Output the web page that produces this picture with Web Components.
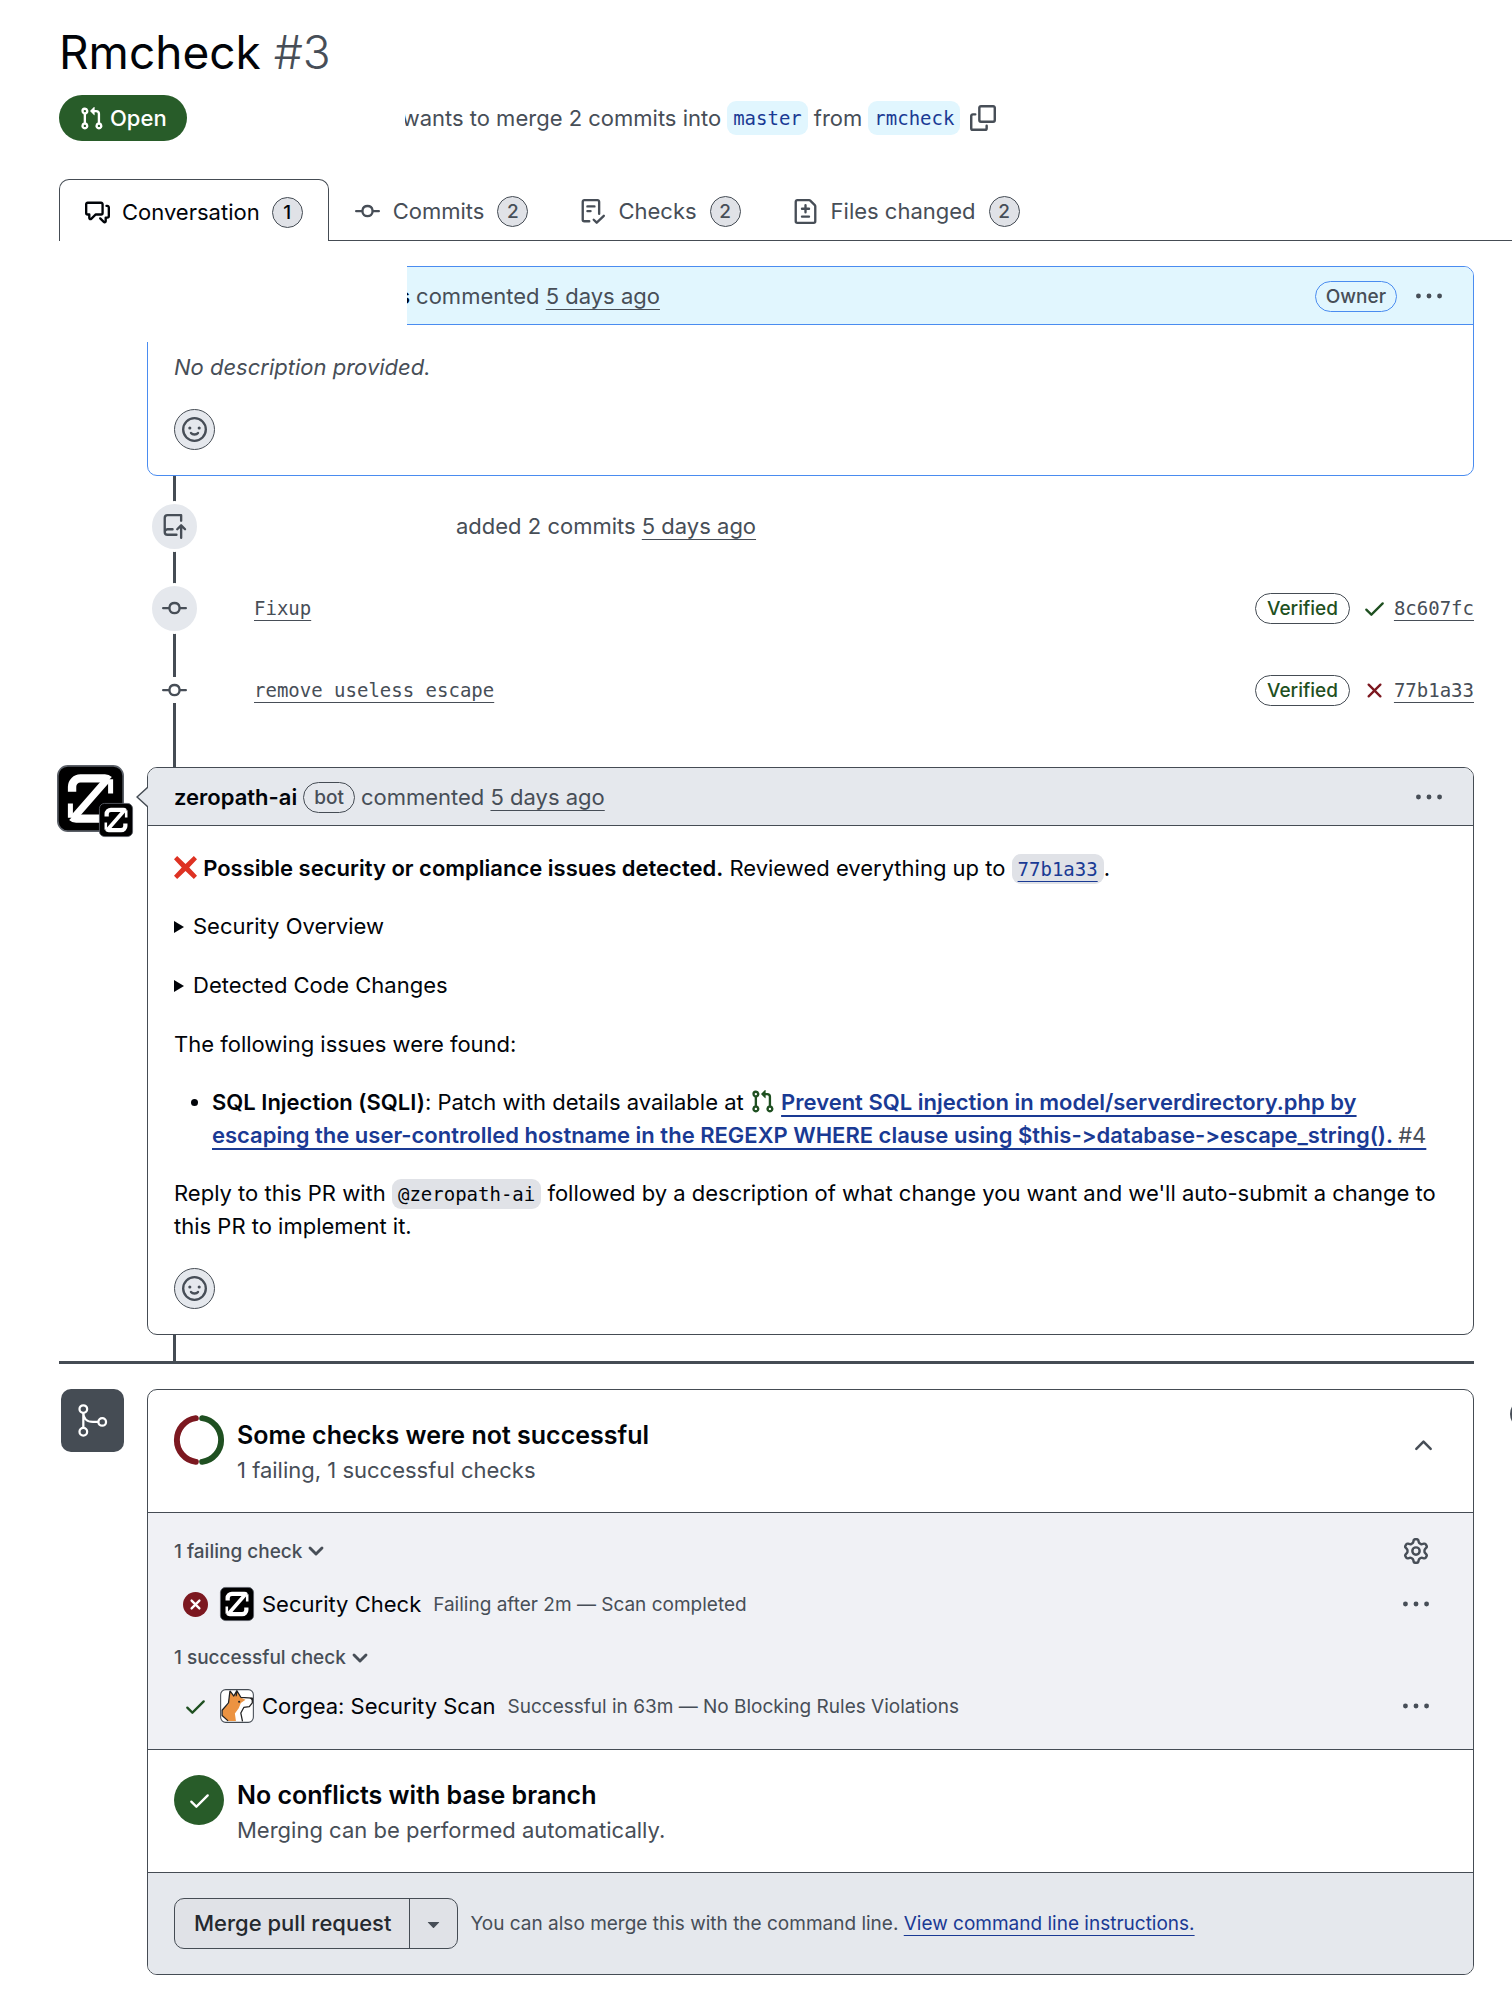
<!DOCTYPE html>
<html lang="en">
<head>
<meta charset="utf-8">
<meta name="viewport" content="width=device-width, initial-scale=1">
<title>Rmcheck #3</title>
<style>
    :root {
        --fg: #010409;
        --muted: #474e57;
        --line: #454c54;
        --subtle: #e5e8ed;
        --inset: #f0f1f5;
        --chip: #e0e2e7;
        --accent: #1a3a94;
        --accent-line: #4a8cf0;
        --accent-bg: #e1f6fe;
        --green: #1f5021;
        --green-bg: #285c29;
        --red: #7c1820;
        --mono: "DejaVu Sans Mono", "Liberation Mono", monospace;
    }

    body {
        margin: 0;
        padding: 22px 0 19px 59px;
        overflow-x: hidden;
        background: #fff;
        color: var(--fg);
        font: 22px/33px Inter, "Liberation Sans", sans-serif;
        font-variant-ligatures: no-contextual;
    }

    a {
        color: var(--muted);
        text-decoration: underline 1px;
        text-underline-offset: 5px;
        text-decoration-skip-ink: none;
    }

    p, ul, details { margin: 0 0 25px; }
    p:last-child { margin: 0; }
    ul { padding-left: 38px; }
    details { margin-bottom: 26px; }
    summary { display: flex; align-items: center; gap: 9px; }

    summary::before {
        content: "";
        border: solid transparent;
        border-width: 6px 0 6px 10px;
        border-left-color: var(--fg);
    }

    b { font-weight: 600; }
    code, .mono { font-family: var(--mono); font-size: 19px; }

    code {
        padding: 4px 6px;
        border-radius: 9px;
        background: var(--chip);
        line-height: 19px;
    }

    code a { color: var(--accent); }
    .muted { color: var(--muted); }
    .cross { vertical-align: -3px; }
    .patch { color: var(--accent); text-decoration-thickness: 2px; font-weight: 600; }
    .patch span { color: var(--muted); font-weight: 400; }
    .green { color: var(--green); }
    .inline { vertical-align: -4px; }

    .column { padding-right: 38px; }
    .timeline { padding-left: 88px; }
</style>
</head>
<body>

<pr-header number="#3" state="Open">
    <span slot="title">Rmcheck</span>
    <span>wants to merge 2 commits into</span>
    <pr-branch name="master"></pr-branch>
    <span>from</span>
    <pr-branch name="rmcheck"></pr-branch>
</pr-header>

<pr-tabs>
    <pr-tab icon="discussion" count="1" selected>Conversation</pr-tab>
    <pr-tab icon="commit" count="2">Commits</pr-tab>
    <pr-tab icon="checklist" count="2">Checks</pr-tab>
    <pr-tab icon="diff" count="2">Files changed</pr-tab>
</pr-tabs>

<main>
    <div class="column">
        <div class="timeline">
            <pr-comment own>
                <b slot="head">s</b>
                <span slot="head" class="muted">commented <a href="#">5 days ago</a></span>
                <pr-label slot="actions" tone="accent">Owner</pr-label>
                <i class="muted">No description provided.</i>
            </pr-comment>

            <pr-events>
                <pr-event icon="push" badge author>
                    <span class="muted">added 2 commits <a href="#">5 days ago</a></span>
                </pr-event>
                <pr-event icon="commit" badge>
                    <a class="mono" href="#">Fixup</a>
                    <pr-label slot="end" tone="green">Verified</pr-label>
                    <pr-icon slot="end" name="check" size="25" style="color: var(--green)"></pr-icon>
                    <a slot="end" class="mono" href="#">8c607fc</a>
                </pr-event>
                <pr-event icon="commit">
                    <a class="mono" href="#">remove useless escape</a>
                    <pr-label slot="end" tone="green">Verified</pr-label>
                    <pr-icon slot="end" name="x" size="25" style="color: var(--red)"></pr-icon>
                    <a slot="end" class="mono" href="#">77b1a33</a>
                </pr-event>
            </pr-events>

            <pr-comment avatar>
                <b slot="head">zeropath-ai</b>
                <pr-label slot="head">bot</pr-label>
                <span slot="head" class="muted">commented <a href="#">5 days ago</a></span>
                <p><pr-icon class="cross" name="cross" size="23"></pr-icon> <b>Possible security or compliance issues detected.</b> Reviewed everything up to <code><a href="#">77b1a33</a></code>.</p>
                <details><summary>Security Overview</summary></details>
                <details><summary>Detected Code Changes</summary></details>
                <p>The following issues were found:</p>
                <ul>
                    <li><b>SQL Injection (SQLI)</b>: Patch with details available at <pr-icon class="green inline" name="pull" size="25"></pr-icon> <a class="patch" href="#">Prevent SQL injection in model/serverdirectory.php by escaping the user-controlled hostname in the REGEXP WHERE clause using $this-&gt;database-&gt;escape_string(). <span>#4</span></a></li>
                </ul>
                <p>Reply to this PR with <code>@zeropath-ai</code> followed by a description of what change you want and we'll auto-submit a change to this PR to implement it.</p>
            </pr-comment>
        </div>
        <pr-divider></pr-divider>
    </div>

    <pr-merge></pr-merge>
</main>

<script>
const icons = {
    pull: '<path d="M1.5 3.25a2.25 2.25 0 1 1 3 2.122v5.256a2.251 2.251 0 1 1-1.5 0V5.372A2.25 2.25 0 0 1 1.5 3.25Zm5.677-.177L9.573.677A.25.25 0 0 1 10 .854V2.5h1A2.5 2.5 0 0 1 13.5 5v5.628a2.251 2.251 0 1 1-1.5 0V5a1 1 0 0 0-1-1h-1v1.646a.25.25 0 0 1-.427.177L7.177 3.427a.25.25 0 0 1 0-.354ZM3.75 2.5a.75.75 0 1 0 0 1.5.75.75 0 0 0 0-1.5Zm0 9.5a.75.75 0 1 0 0 1.5.75.75 0 0 0 0-1.5Zm8.25.75a.75.75 0 1 0 1.5 0 .75.75 0 0 0-1.5 0Z"/>',
    discussion: '<path d="M1.75 1h8.5c.966 0 1.75.784 1.75 1.75v5.5A1.75 1.75 0 0 1 10.25 10H7.061l-2.574 2.573A1.458 1.458 0 0 1 2 11.543V10h-.25A1.75 1.75 0 0 1 0 8.25v-5.5C0 1.784.784 1 1.75 1ZM1.5 2.75v5.5c0 .138.112.25.25.25h1a.75.75 0 0 1 .75.75v2.19l2.72-2.72a.749.749 0 0 1 .53-.22h3.5a.25.25 0 0 0 .25-.25v-5.5a.25.25 0 0 0-.25-.25h-8.5a.25.25 0 0 0-.25.25Zm13 2a.25.25 0 0 0-.25-.25h-.5a.75.75 0 0 1 0-1.5h.5c.966 0 1.75.784 1.75 1.75v5.5A1.75 1.75 0 0 1 14.25 12H14v1.543a1.458 1.458 0 0 1-2.487 1.03L9.22 12.28a.749.749 0 0 1 .326-1.275.749.749 0 0 1 .734.215l2.22 2.22v-2.19a.75.75 0 0 1 .75-.75h1a.25.25 0 0 0 .25-.25Z"/>',
    commit: '<path d="M11.93 8.5a4.002 4.002 0 0 1-7.86 0H.75a.75.75 0 0 1 0-1.5h3.32a4.002 4.002 0 0 1 7.86 0h3.32a.75.75 0 0 1 0 1.5Zm-1.43-.75a2.5 2.5 0 1 0-5 0 2.5 2.5 0 0 0 5 0Z"/>',
    checklist: '<path d="M2.5 1.75v11.5c0 .138.112.25.25.25h3.17a.75.75 0 0 1 0 1.5H2.75A1.75 1.75 0 0 1 1 13.25V1.75C1 .784 1.784 0 2.75 0h8.5C12.216 0 13 .784 13 1.75v7.736a.75.75 0 0 1-1.5 0V1.75a.25.25 0 0 0-.25-.25h-8.5a.25.25 0 0 0-.25.25Zm13.274 9.537-4.557 4.45a.75.75 0 0 1-1.055-.008l-1.943-1.95a.75.75 0 0 1 1.062-1.058l1.419 1.425 4.026-3.932a.75.75 0 1 1 1.048 1.074ZM4.75 4h4.5a.75.75 0 0 1 0 1.5h-4.5a.75.75 0 0 1 0-1.5ZM4 7.75A.75.75 0 0 1 4.75 7h2a.75.75 0 0 1 0 1.5h-2A.75.75 0 0 1 4 7.75Z"/>',
    diff: '<path d="M1 1.75C1 .784 1.784 0 2.75 0h7.586c.464 0 .909.184 1.237.513l2.914 2.914c.329.328.513.773.513 1.237v9.586A1.75 1.75 0 0 1 13.25 16H2.75A1.75 1.75 0 0 1 1 14.25Zm1.75-.25a.25.25 0 0 0-.25.25v12.5c0 .138.112.25.25.25h10.5a.25.25 0 0 0 .25-.25V4.664a.25.25 0 0 0-.073-.177l-2.914-2.914a.25.25 0 0 0-.177-.073ZM8 3.25a.75.75 0 0 1 .75.75v1.5h1.5a.75.75 0 0 1 0 1.5h-1.5v1.5a.75.75 0 0 1-1.5 0V7h-1.5a.75.75 0 0 1 0-1.5h1.5V4A.75.75 0 0 1 8 3.25Zm-3 8a.75.75 0 0 1 .75-.75h4.5a.75.75 0 0 1 0 1.5h-4.5a.75.75 0 0 1-.75-.75Z"/>',
    copy: '<path d="M0 6.75C0 5.784.784 5 1.75 5h1.5a.75.75 0 0 1 0 1.5h-1.5a.25.25 0 0 0-.25.25v7.5c0 .138.112.25.25.25h7.5a.25.25 0 0 0 .25-.25v-1.5a.75.75 0 0 1 1.5 0v1.5A1.75 1.75 0 0 1 9.25 16h-7.5A1.75 1.75 0 0 1 0 14.25Z"/><path d="M5 1.75C5 .784 5.784 0 6.75 0h7.5C15.216 0 16 .784 16 1.75v7.5A1.75 1.75 0 0 1 14.25 11h-7.5A1.75 1.75 0 0 1 5 9.25Zm1.75-.25a.25.25 0 0 0-.25.25v7.5c0 .138.112.25.25.25h7.5a.25.25 0 0 0 .25-.25v-7.5a.25.25 0 0 0-.25-.25Z"/>',
    kebab: '<path d="M8 9.5a1.5 1.5 0 1 0 0-3 1.5 1.5 0 0 0 0 3ZM1.5 9.5a1.5 1.5 0 1 0 0-3 1.5 1.5 0 0 0 0 3Zm13 0a1.5 1.5 0 1 0 0-3 1.5 1.5 0 0 0 0 3Z"/>',
    smiley: '<circle cx="8" cy="8" r="7.25" fill="none" stroke="currentColor" stroke-width="1.5"/><circle cx="5" cy="7" r="1"/><circle cx="11" cy="7" r="1"/><path d="M5.75 10.25c1 1.3 3.5 1.3 4.5 0" fill="none" stroke="currentColor" stroke-width="1.5" stroke-linecap="round"/>',
    push: '<path d="M1 2.5A2.5 2.5 0 0 1 3.5 0h8.75a.75.75 0 0 1 .75.75v3.5a.75.75 0 0 1-1.5 0V1.5h-8a1 1 0 0 0-1 1v6.708A2.493 2.493 0 0 1 3.5 9h3.25a.75.75 0 0 1 0 1.5H3.5a1 1 0 0 0 0 2h5.75a.75.75 0 0 1 0 1.5H3.5A2.5 2.5 0 0 1 1 11.5Zm13.23 7.79-1.225-1.224v6.184a.75.75 0 0 1-1.5 0V9.066L10.28 10.29a.75.75 0 0 1-1.06-1.061l2.505-2.504a.75.75 0 0 1 1.06 0L15.29 9.23a.751.751 0 0 1-.018 1.042.751.751 0 0 1-1.042.018Z"/>',
    check: '<path d="M13.78 4.22a.75.75 0 0 1 0 1.06l-7.25 7.25a.75.75 0 0 1-1.06 0L2.22 9.28a.751.751 0 0 1 .018-1.042.751.751 0 0 1 1.042-.018L6 10.94l6.72-6.72a.75.75 0 0 1 1.06 0Z"/>',
    x: '<path d="M3.72 3.72a.75.75 0 0 1 1.06 0L8 6.94l3.22-3.22a.749.749 0 0 1 1.275.326.749.749 0 0 1-.215.734L9.06 8l3.22 3.22a.749.749 0 0 1-.326 1.275.749.749 0 0 1-.734-.215L8 9.06l-3.22 3.22a.751.751 0 0 1-1.042-.018.751.751 0 0 1-.018-1.042L6.94 8 3.72 4.78a.75.75 0 0 1 0-1.06Z"/>',
    cross: '<path d="M2.2 0 8 5.5 13.8 0 16 2.2 10.6 8 16 13.8 13.8 16 8 10.5 2.2 16 0 13.8 5.4 8 0 2.2Z" fill="#de3223"/>',
    failed: '<circle cx="8" cy="8" r="8" fill="var(--red)"/><path d="m5.5 5.5 5 5m0-5-5 5" stroke="#fff" stroke-width="1.5" stroke-linecap="round"/>',
    down: '<path d="M4 6l4 4 4-4" fill="none" stroke="currentColor" stroke-width="1.9" stroke-linecap="round" stroke-linejoin="round"/>',
    up: '<path d="M3.75 10 8 5.75 12.25 10" fill="none" stroke="currentColor" stroke-width="1.5" stroke-linecap="round" stroke-linejoin="round"/>',
    triangle: '<path d="m4.427 7.427 3.396 3.396a.25.25 0 0 0 .354 0l3.396-3.396A.25.25 0 0 0 11.396 7H4.604a.25.25 0 0 0-.177.427Z"/>',
    gear: '<path d="M8 0a8.2 8.2 0 0 1 .701.031C9.444.095 9.99.645 10.16 1.29l.288 1.107c.018.066.079.158.212.224.231.114.454.243.668.386.123.082.233.09.299.071l1.103-.303c.644-.176 1.392.021 1.82.63.27.385.506.792.704 1.218.315.675.111 1.422-.364 1.891l-.814.806c-.049.048-.098.147-.088.294.016.257.016.515 0 .772-.01.147.038.246.088.294l.814.806c.475.469.679 1.216.364 1.891a7.977 7.977 0 0 1-.704 1.217c-.428.61-1.176.807-1.82.63l-1.102-.302c-.067-.019-.177-.011-.3.071a5.909 5.909 0 0 1-.668.386c-.133.066-.194.158-.211.224l-.29 1.106c-.168.646-.715 1.196-1.458 1.26a8.006 8.006 0 0 1-1.402 0c-.743-.064-1.289-.614-1.458-1.26l-.289-1.106c-.018-.066-.079-.158-.212-.224a5.738 5.738 0 0 1-.668-.386c-.123-.082-.233-.09-.299-.071l-1.103.303c-.644.176-1.392-.021-1.82-.63a8.12 8.12 0 0 1-.704-1.218c-.315-.675-.111-1.422.363-1.891l.815-.806c.05-.048.098-.147.088-.294a6.214 6.214 0 0 1 0-.772c.01-.147-.038-.246-.088-.294l-.815-.806C.635 6.045.431 5.298.746 4.623a7.92 7.92 0 0 1 .704-1.217c.428-.61 1.176-.807 1.82-.63l1.102.302c.067.019.177.011.3-.071.214-.143.437-.272.668-.386.133-.066.194-.158.211-.224l.29-1.106C6.009.645 6.556.095 7.299.03 7.53.01 7.764 0 8 0Zm-.571 1.525c-.036.003-.108.036-.137.146l-.289 1.105c-.147.561-.549.967-.998 1.189-.173.086-.34.183-.5.29-.417.278-.97.423-1.529.27l-1.103-.303c-.109-.03-.175.016-.195.045-.22.312-.412.644-.573.99-.014.031-.021.11.059.19l.815.806c.411.406.562.957.53 1.456a4.709 4.709 0 0 0 0 .582c.032.499-.119 1.05-.53 1.456l-.815.806c-.081.08-.073.159-.059.19.162.346.353.677.573.989.02.03.085.076.195.046l1.102-.303c.56-.153 1.113-.008 1.53.27.161.107.328.204.501.29.447.222.85.629.997 1.189l.289 1.105c.029.109.101.143.137.146a6.6 6.6 0 0 0 1.142 0c.036-.003.108-.036.137-.146l.289-1.105c.147-.561.549-.967.998-1.189.173-.086.34-.183.5-.29.417-.278.97-.423 1.529-.27l1.103.303c.109.029.175-.016.195-.045.22-.313.411-.644.573-.99.014-.031.021-.11-.059-.19l-.815-.806c-.411-.406-.562-.957-.53-1.456a4.709 4.709 0 0 0 0-.582c-.032-.499.119-1.05.53-1.456l.815-.806c.081-.08.073-.159.059-.19a6.464 6.464 0 0 0-.573-.989c-.02-.03-.085-.076-.195-.046l-1.102.303c-.56.153-1.113.008-1.53-.27a4.44 4.44 0 0 0-.501-.29c-.447-.222-.85-.629-.997-1.189l-.289-1.105c-.029-.11-.101-.143-.137-.146a6.6 6.6 0 0 0-1.142 0ZM11 8a3 3 0 1 1-6 0 3 3 0 0 1 6 0ZM9.5 8a1.5 1.5 0 1 0-3.001.001A1.5 1.5 0 0 0 9.5 8Z"/>',
    ring: '<g fill="none" stroke-width="1.9" stroke-linecap="round"><path d="M7 1a7.07 7.07 0 0 0 0 14" stroke="var(--red)"/><path d="M9 1a7.07 7.07 0 0 1 0 14" stroke="var(--green)"/></g>',
    merge: '<g fill="none" stroke="currentColor"><circle cx="3.7" cy="2.7" r="1.7"/><circle cx="3.7" cy="12.8" r="1.7"/><circle cx="12.1" cy="8.4" r="1.7"/><path d="M3.7 4.4v6.7M3.7 4.4c0 2.4 1.6 4 4.3 4h2.4"/></g>',
    // two hooked bars joined by a diagonal, drawn on black
    zero: '<rect x=".2" y=".2" width="15.6" height="15.6" rx="2.4" fill="#000" stroke="#5b6068" stroke-width=".4"/><g fill="none" stroke="#fff"><path d="M3.6 6.4V5.2a2 2 0 0 1 2-2h5.8a1.4 1.4 0 0 1 1 .4" stroke-width="2"/><path d="M12.4 9.6v1.2a2 2 0 0 1-2 2H4.6a1.4 1.4 0 0 1-1-.4" stroke-width="2"/><path d="M12.2 3.2 3.8 12.8" stroke-width="1.7"/><path d="M12.8 3.4v3.4M3.2 12.6V9.2" stroke-width="1.2"/></g>',
    corgi: '<rect x=".3" y=".3" width="15.4" height="15.4" rx="2.4" fill="#fff" stroke="#454c54" stroke-width=".5"/><path d="M4.7.9 6.5 3 7.9.8 9.7 4 12 5 9.8 6.6 8.8 9 7 11.5 7.5 15H3.6L1.2 12.6 1 9.6 4 7Z" fill="#ec9341"/><path d="M4.7.9 4 6.5 1 10v2.5L3.8 15M4.7.9 6.5 3.3 7.9.8l1.9 3.1 5.4.4v2.2l-1.4 1.8-2.6.4-1.4 2.6.8 3.9M7.9.8 7.6 3.4" fill="none" stroke="#222" stroke-width=".6" stroke-linejoin="round"/><path d="M13.9 4.2h1.5v1.5Z" fill="#222"/><circle cx="9" cy="6" r=".5" fill="#222"/>',
    circle: '<circle cx="8" cy="8" r="7.25" fill="none" stroke="currentColor" stroke-width="1.5"/>'
};

const base = `
    <style>
        :host { display: block; }
        * { box-sizing: border-box; }
        button {
            display: flex;
            align-items: center;
            justify-content: center;
            padding: 0;
            border: 0;
            background: none;
            color: var(--muted);
            font: inherit;
            cursor: pointer;
        }
    </style>
`;

// Base class: every element renders its markup once into an open root
class PrElement extends HTMLElement {
    constructor() {
        super();
        this.attachShadow({ mode: 'open' });
    }

    connectedCallback() {
        const template = document.createElement('template');
        template.innerHTML = base + this.render();
        this.shadowRoot.replaceChildren(template.content);
    }

    attr(name) {
        return this.getAttribute(name) || '';
    }
}

class Icon extends PrElement {
    render() {
        const size = this.attr('size') || 25;
        return `
            <style>
                :host { display: inline-block; flex: none; line-height: 0; }
                svg { display: block; overflow: visible; fill: currentColor; }
            </style>
            <svg width="${size}" height="${size}" viewBox="0 0 16 16" aria-hidden="true">${icons[this.attr('name')]}</svg>
        `;
    }
}

class Label extends PrElement {
    render() {
        return `
            <style>
                :host {
                    display: inline-flex;
                    align-items: center;
                    height: 31px;
                    box-sizing: border-box;
                    padding: 1px 10px 0;
                    border: 1px solid var(--line);
                    border-radius: 16px;
                    color: var(--muted);
                    font-size: 19px;
                    font-weight: 500;
                }
                :host([tone="accent"]) { border-color: var(--accent-line); }
                :host([tone="green"]) { padding: 1px 11px 0; color: var(--green); }
            </style>
            <slot></slot>
        `;
    }
}

class Branch extends PrElement {
    render() {
        return `
            <style>
                :host { height: 34px; padding: 0 6px; border-radius: 9px; background: var(--accent-bg); }
                a { color: var(--accent); font: 19px/35px var(--mono); text-decoration: none; }
            </style>
            <a href="#">${this.attr('name')}</a>
        `;
    }
}

class Header extends PrElement {
    render() {
        return `
            <style>
                h1 { margin: 0 0 13px; font-size: 46px; font-weight: 400; line-height: 60px; }
                h1 span { color: var(--muted); font-weight: 300; }
                .meta { display: flex; align-items: center; gap: 6px; color: var(--muted); }
                .state {
                    display: flex;
                    align-items: center;
                    gap: 6px;
                    height: 46px;
                    padding: 0 20px;
                    border-radius: 23px;
                    background: var(--green-bg);
                    color: #fff;
                    font-weight: 500;
                }
                /* the author block stays blank */
                .blank { z-index: 1; width: 212px; height: 33px; margin-right: -9px; background: #fff; }
                button { margin-left: 4px; }
            </style>
            <h1><slot name="title"></slot> <span>${this.attr('number')}</span></h1>
            <div class="meta">
                <div class="state"><pr-icon name="pull"></pr-icon>${this.attr('state')}</div>
                <div class="blank"></div>
                <slot></slot>
                <button aria-label="Copy branch name"><pr-icon name="copy" size="26"></pr-icon></button>
            </div>
        `;
    }
}

class Tabs extends PrElement {
    render() {
        return `
            <style>
                nav { display: flex; height: 62px; margin: 38px 0 25px; }
                .rest { flex: 1; border-bottom: 1px solid var(--line); }
            </style>
            <nav><slot></slot><div class="rest"></div></nav>
        `;
    }
}

class Tab extends PrElement {
    render() {
        return `
            <style>
                :host { border-bottom: 1px solid var(--line); }
                :host([selected]) {
                    border: 1px solid var(--line);
                    border-bottom: 0;
                    border-radius: 10px 10px 0 0;
                }
                a {
                    display: flex;
                    align-items: center;
                    gap: 13px;
                    height: 50px;
                    padding: 15px 26px 0;
                    color: var(--muted);
                    text-decoration: none;
                }
                :host([selected]) a { gap: 12px; padding: 14px 25px 0; color: var(--fg); }
                .count {
                    display: flex;
                    align-items: center;
                    justify-content: center;
                    width: 31px;
                    height: 31px;
                    border: 1px solid var(--line);
                    border-radius: 50%;
                    background: var(--chip);
                    font-size: 19px;
                    font-weight: 500;
                }
            </style>
            <a href="#"><pr-icon name="${this.attr('icon')}"></pr-icon><slot></slot><span class="count">${this.attr('count')}</span></a>
        `;
    }
}

class Comment extends PrElement {
    render() {
        const avatar = this.hasAttribute('avatar') ? `
            <div class="avatar"><pr-icon name="zero" size="67"></pr-icon><pr-icon class="app" name="zero" size="34"></pr-icon></div>
            <svg class="caret" width="12" height="22" viewBox="0 0 12 22"><path d="M12 1 1 11l11 10" fill="var(--subtle)" stroke="var(--line)" stroke-width="1.5"/></svg>
        ` : '';
        // the author block of an own comment stays blank
        const blank = this.hasAttribute('own') ? '<div class="blank"></div>' : '';
        return `
            <style>
                :host { position: relative; --edge: var(--line); --head: var(--subtle); --pad: 26px; }
                :host([own]) { --edge: var(--accent-line); --head: var(--accent-bg); --pad: 250px; }
                article { border: 1px solid var(--edge); border-radius: 10px; background: #fff; overflow: hidden; }
                header {
                    display: flex;
                    align-items: center;
                    gap: 6px;
                    height: 58px;
                    padding: 1px 31px 0 var(--pad);
                    border-bottom: 1px solid var(--edge);
                    background: var(--head);
                }
                .actions { display: flex; align-items: center; gap: 19px; margin-left: auto; }
                .body { padding: 26px 25px 25px 26px; }
                .react {
                    width: 41px;
                    height: 41px;
                    margin-top: 25px;
                    border: 1px solid var(--line);
                    border-radius: 50%;
                    background: var(--subtle);
                }
                .avatar { position: absolute; top: -2px; left: -90px; }
                .app { position: absolute; top: 38px; left: 42px; }
                .caret { position: absolute; top: 19px; left: -11px; }
                .blank { position: absolute; top: 0; left: 0; width: 260px; height: 76px; background: #fff; }
            </style>
            ${avatar}
            <article>
                <header>
                    <slot name="head"></slot>
                    <div class="actions"><slot name="actions"></slot><button aria-label="Show options"><pr-icon name="kebab" size="26"></pr-icon></button></div>
                </header>
                <div class="body">
                    <slot></slot>
                    <button class="react" aria-label="Add reaction"><pr-icon name="smiley"></pr-icon></button>
                </div>
            </article>
            ${blank}
        `;
    }
}

class Events extends PrElement {
    render() {
        return `
            <style>
                :host {
                    padding: 9px 0 36px;
                    background: linear-gradient(var(--line), var(--line)) 26px 0 / 3px 100% no-repeat;
                }
            </style>
            <slot></slot>
        `;
    }
}

class TimelineEvent extends PrElement {
    render() {
        return `
            <style>
                :host { display: flex; align-items: center; height: 82px; }
                .badge {
                    display: flex;
                    flex: none;
                    align-items: center;
                    justify-content: center;
                    width: 51px;
                    height: 26px;
                    margin-left: 2px;
                    background: #fff;
                    color: var(--muted);
                }
                :host([badge]) .badge {
                    height: 51px;
                    border: 3px solid #fff;
                    border-radius: 50%;
                    background: var(--subtle);
                }
                .text { padding-left: 54px; }
                :host([author]) .text { padding-left: 256px; }
                .end { display: flex; align-items: center; gap: 7px; margin-left: auto; }
                ::slotted(pr-label) { margin-right: 5px; }
            </style>
            <div class="badge"><pr-icon name="${this.attr('icon')}"></pr-icon></div>
            <div class="text"><slot></slot></div>
            <div class="end"><slot name="end"></slot></div>
        `;
    }
}

class Divider extends PrElement {
    render() {
        return `
            <style>
                :host {
                    height: 29px;
                    box-sizing: border-box;
                    margin-bottom: 25px;
                    border-bottom: 3px solid var(--line);
                    background: linear-gradient(var(--line), var(--line)) 114px 0 / 3px 100% no-repeat;
                }
            </style>
        `;
    }
}

class Status extends PrElement {
    render() {
        return `
            <style>
                :host { display: flex; align-items: flex-start; gap: 13px; padding: 25px; padding-left: 26px; }
                .mark {
                    display: flex;
                    align-items: center;
                    justify-content: center;
                    width: 50px;
                    height: 50px;
                    border-radius: 50%;
                    color: #fff;
                }
                :host([done]) .mark { background: var(--green-bg); }
                h3 { margin: 1px 0 0; font-size: 25px; font-weight: 600; line-height: 38px; }
                p { margin: 0; color: var(--muted); }
                .end { margin-left: auto; }
            </style>
            <div class="mark"><slot name="mark"></slot></div>
            <div><h3>${this.attr('heading')}</h3><p><slot></slot></p></div>
            <div class="end"><slot name="end"></slot></div>
        `;
    }
}

class CheckGroup extends PrElement {
    render() {
        return `
            <style>
                h4 {
                    display: flex;
                    align-items: center;
                    justify-content: space-between;
                    height: 41px;
                    margin: 5px 0 0;
                    padding: 0 44px 0 26px;
                    color: var(--muted);
                    font-size: 19px;
                    font-weight: 500;
                }
                :host([settings]) h4 { height: 50px; margin: 0; }
                button { gap: 2px; }
            </style>
            <h4><button>${this.attr('heading')}<pr-icon name="down" size="24"></pr-icon></button><slot name="settings"></slot></h4>
            <slot></slot>
        `;
    }
}

class Check extends PrElement {
    render() {
        return `
            <style>
                :host { display: flex; align-items: center; height: 56px; padding: 0 44px 0 35px; }
                .state { margin-right: 12px; color: var(--green); }
                .logo { margin-right: 8px; }
                small { margin-left: 12px; color: var(--muted); font-size: 19px; }
                button { margin-left: auto; }
            </style>
            <pr-icon class="state" name="${this.attr('state')}"></pr-icon>
            <pr-icon class="logo" name="${this.attr('logo')}" size="34"></pr-icon>
            <span>${this.attr('name')}</span>
            <small><slot></slot></small>
            <button aria-label="More options"><pr-icon name="kebab" size="26"></pr-icon></button>
        `;
    }
}

class Merge extends PrElement {
    render() {
        return `
            <style>
                :host { display: flex; align-items: flex-start; }
                .badge {
                    display: flex;
                    flex: none;
                    align-items: center;
                    justify-content: center;
                    width: 63px;
                    height: 63px;
                    margin: 0 23px 0 2px;
                    border-radius: 10px;
                    background: var(--line);
                    color: #fff;
                }
                section { flex: 1; min-width: 0; border: 1px solid var(--line); border-radius: 10px; overflow: hidden; }
                .checks { padding: 13px 0 15px; border: solid var(--line); border-width: 1px 0; background: var(--inset); }
                .toggle { width: 50px; height: 60px; }
                footer {
                    display: flex;
                    align-items: center;
                    gap: 12px;
                    padding: 25px 26px;
                    border-top: 1px solid var(--line);
                    background: var(--subtle);
                    color: var(--muted);
                    font-size: 19px;
                }
                .group {
                    display: flex;
                    flex: none;
                    height: 51px;
                    border: 1px solid var(--line);
                    border-radius: 10px;
                    background: var(--chip);
                }
                .group button { padding: 0 18px 0 19px; color: #25292e; font-size: 22px; font-weight: 500; }
                .group .more { padding: 0 11px; border-left: 1px solid var(--line); color: var(--muted); }
                a { color: var(--accent); text-decoration: underline 1px; text-underline-offset: 5px; text-decoration-skip-ink: none; }
                aside { width: 2px; margin: 10px 0 0 36px; overflow: hidden; color: var(--muted); }
            </style>
            <div class="badge"><pr-icon name="merge" size="36"></pr-icon></div>
            <section>
                <pr-status heading="Some checks were not successful">
                    <pr-icon slot="mark" name="ring" size="50"></pr-icon>
                    1 failing, 1 successful checks
                    <button slot="end" class="toggle" aria-label="Collapse checks"><pr-icon name="up" size="27"></pr-icon></button>
                </pr-status>
                <div class="checks">
                    <pr-check-group heading="1 failing check" settings>
                        <button slot="settings" aria-label="Settings"><pr-icon name="gear" size="26"></pr-icon></button>
                        <pr-check state="failed" logo="zero" name="Security Check">Failing after 2m — Scan completed</pr-check>
                    </pr-check-group>
                    <pr-check-group heading="1 successful check">
                        <pr-check state="check" logo="corgi" name="Corgea: Security Scan">Successful in 63m — No Blocking Rules Violations</pr-check>
                    </pr-check-group>
                </div>
                <pr-status heading="No conflicts with base branch" done>
                    <pr-icon slot="mark" name="check" size="25"></pr-icon>
                    Merging can be performed automatically.
                </pr-status>
                <footer>
                    <div class="group">
                        <button>Merge pull request</button>
                        <button class="more" aria-label="Select merge method"><pr-icon name="triangle"></pr-icon></button>
                    </div>
                    <span>You can also merge this with the command line. <a href="#">View command line instructions.</a></span>
                </footer>
            </section>
            <aside><pr-icon name="circle" size="30"></pr-icon></aside>
        `;
    }
}

customElements.define('pr-icon', Icon);
customElements.define('pr-label', Label);
customElements.define('pr-branch', Branch);
customElements.define('pr-header', Header);
customElements.define('pr-tabs', Tabs);
customElements.define('pr-tab', Tab);
customElements.define('pr-comment', Comment);
customElements.define('pr-events', Events);
customElements.define('pr-event', TimelineEvent);
customElements.define('pr-divider', Divider);
customElements.define('pr-status', Status);
customElements.define('pr-check-group', CheckGroup);
customElements.define('pr-check', Check);
customElements.define('pr-merge', Merge);
</script>
</body>
</html>
